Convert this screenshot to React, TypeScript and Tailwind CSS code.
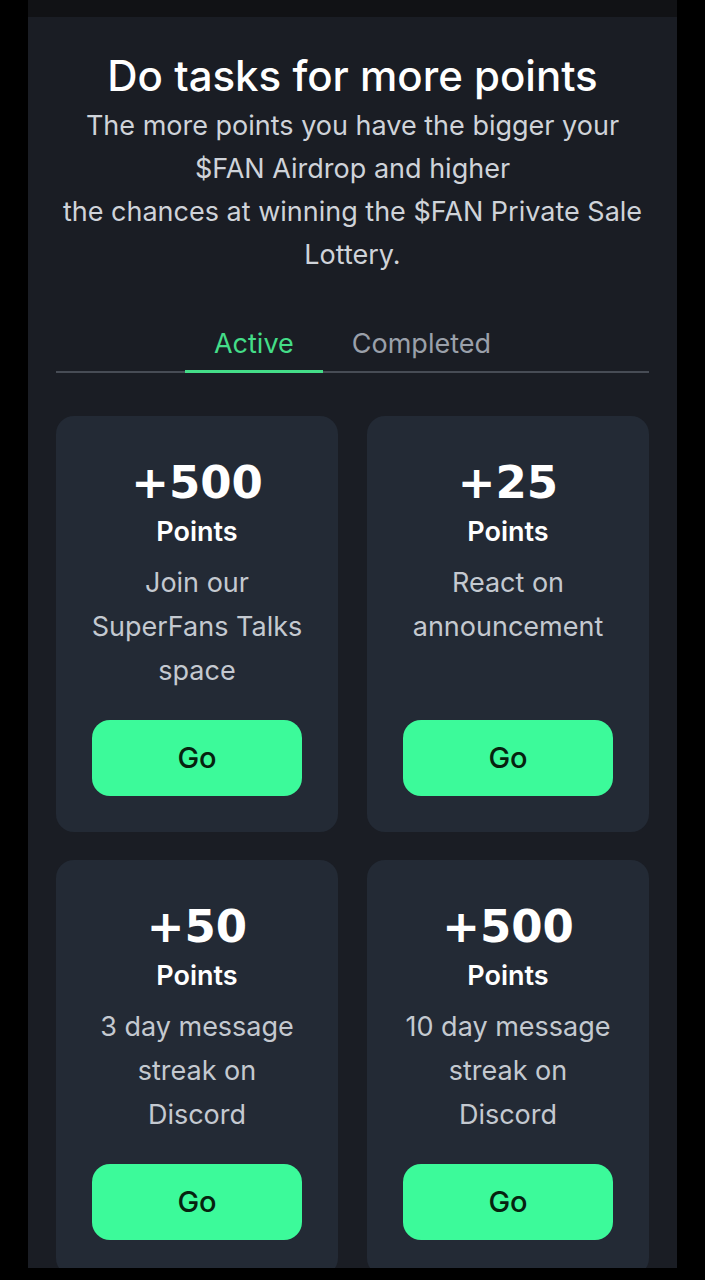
import React, { useState } from "react";

type Task = {
  points: number;
  lines: string[];
};

const TASKS: Task[] = [
  { points: 500, lines: ["Join our", "SuperFans Talks", "space"] },
  { points: 25, lines: ["React on", "announcement"] },
  { points: 50, lines: ["3 day message", "streak on", "Discord"] },
  { points: 500, lines: ["10 day message", "streak on", "Discord"] },
];

function TaskCard({ task }: { task: Task }) {
  return (
    <div className="flex h-[416px] flex-col items-center rounded-[18px] bg-[#232a35] px-9 pb-9 pt-[38px] text-center">
      <div className="font-['DejaVu_Sans',sans-serif] text-[45px] font-bold leading-[58px] text-white">
        +{task.points}
      </div>
      <div className="mt-[2px] text-[27px] font-semibold leading-[36px] text-white">Points</div>
      <div className="-mx-4 mt-[11px] whitespace-nowrap text-[27px] leading-[44px] text-[#c4c9d0]">
        {task.lines.map((l) => (
          <div key={l}>{l}</div>
        ))}
      </div>
      <button className="mt-auto flex h-[76px] w-full shrink-0 items-center justify-center rounded-[18px] bg-[#3cfa9a] text-[29px] font-medium text-[#06220f]">
        Go
      </button>
    </div>
  );
}

export default function App() {
  const [tab, setTab] = useState<"active" | "completed">("active");

  return (
    <div className="flex h-[1280px] w-full justify-center bg-black font-['Inter',sans-serif]">
      <div className="flex h-[1268px] w-[649px] flex-col overflow-hidden bg-[#1a1d24]">
        <div className="h-[17px] shrink-0 bg-[#111215]" />
        <div className="flex flex-col px-[28px] pt-[35px]">
          <h1 className="text-center text-[42px] font-medium leading-[48px] text-white">
            Do tasks for more points
          </h1>
          <p className="mt-[4px] text-center text-[27px] leading-[43px] text-[#cfd3d9]">
            The more points you have the bigger your $FAN Airdrop and higher
            <br />
            the chances at winning the $FAN Private Sale Lottery.
          </p>

          <div className="mt-[48px] flex justify-center border-b-2 border-[#474c55]">
            <button
              onClick={() => setTab("active")}
              className={`-mb-[2px] border-b-[3px] px-[29px] pb-[6px] text-[27px] leading-[40px] ${
                tab === "active"
                  ? "border-[#44dd88] text-[#44dd88]"
                  : "border-transparent text-[#9aa0aa]"
              }`}
            >
              Active
            </button>
            <button
              onClick={() => setTab("completed")}
              className={`-mb-[2px] border-b-[3px] px-[29px] pb-[6px] text-[27px] leading-[40px] ${
                tab === "completed"
                  ? "border-[#44dd88] text-[#44dd88]"
                  : "border-transparent text-[#9aa0aa]"
              }`}
            >
              Completed
            </button>
          </div>

          <div className="mt-[43px] grid grid-cols-2 gap-x-[29px] gap-y-[28px]">
            {TASKS.map((t, i) => (
              <TaskCard key={i} task={t} />
            ))}
          </div>
        </div>
      </div>
    </div>
  );
}
